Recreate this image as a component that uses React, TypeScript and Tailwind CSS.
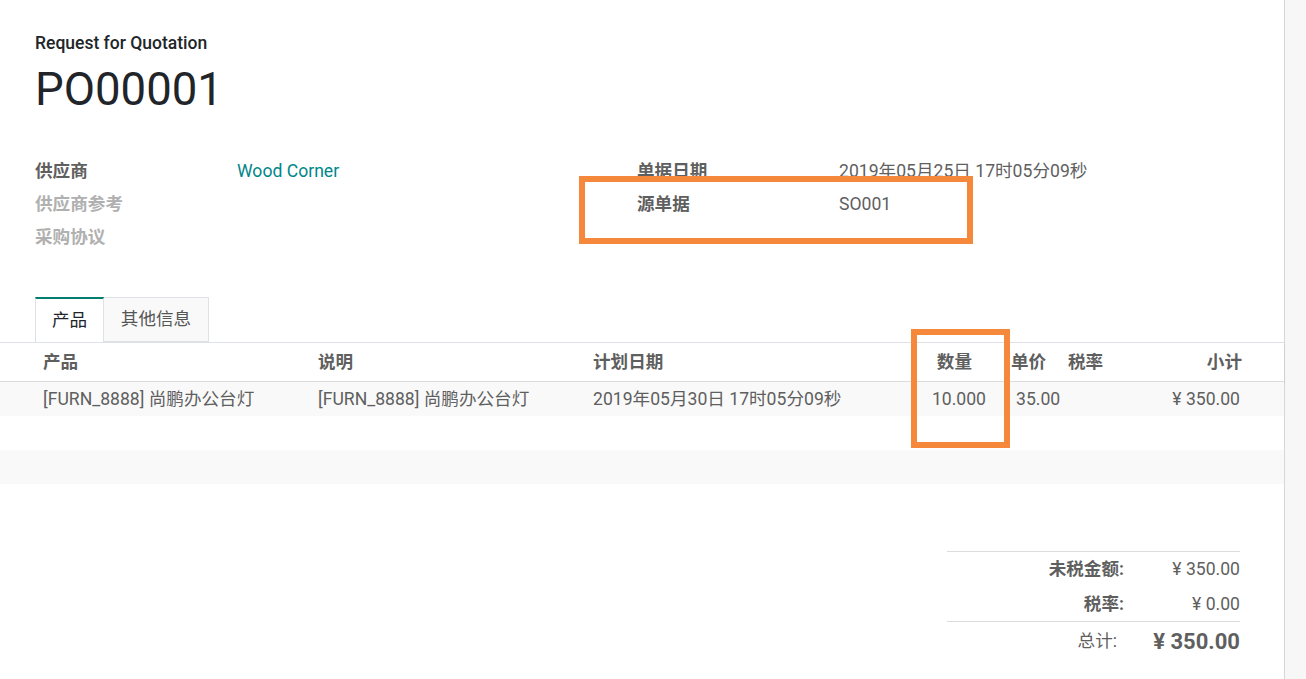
const font = { fontFamily: 'Roboto, "Noto Sans CJK SC", sans-serif' };

type Line = {
  product: string;
  description: string;
  plannedDate: string;
  qty: string;
  price: string;
  tax: string;
  subtotal: string;
};

const lines: Line[] = [
  {
    product: '[FURN_8888] 尚鹏办公台灯',
    description: '[FURN_8888] 尚鹏办公台灯',
    plannedDate: '2019年05月30日 17时05分09秒',
    qty: '10.000',
    price: '35.00',
    tax: '',
    subtotal: '¥ 350.00',
  },
];

const Field = ({ label, value, muted, link }: { label: string; value?: string; muted?: boolean; link?: boolean }) => (
  <div className="flex h-[33px] items-center">
    <div className={`w-[202px] font-bold ${muted ? 'text-[#b0b0b0]' : 'text-[#5f5f5f]'}`}>{label}</div>
    {value && <div className={link ? 'text-[#00868b]' : 'text-[#5f5f5f]'}>{value}</div>}
  </div>
);

export default function App() {
  return (
    <div className="flex min-h-[679px] bg-white text-[17.6px]" style={font}>
      <div className="relative w-[1285px] shrink-0 border-r border-[#d6d6d6]">
        <div className="px-[35px] pt-[31px]">
          <div className="text-[17.5px] font-medium leading-6 text-[#212529]">Request for Quotation</div>
          <h1 className="mt-[7px] text-[45.5px] leading-[56px] text-[#212529]">PO00001</h1>

          <div className="mt-[37px] flex">
            <div className="w-[602px]">
              <Field label="供应商" value="Wood Corner" link />
              <Field label="供应商参考" muted />
              <Field label="采购协议" muted />
            </div>
            <div>
              <Field label="单据日期" value="2019年05月25日 17时05分09秒" />
              <Field label="源单据" value="SO001" />
            </div>
          </div>

          <div className="mt-[43px] flex">
            <div className="relative z-10 -mb-px flex h-[45px] w-[69px] items-center justify-center border-x border-t-2 border-[#dee2e6] border-t-[#017e6f] bg-white text-[#212529]">
              产品
            </div>
            <div className="flex h-[45px] w-[105px] items-center justify-center border border-l-0 border-[#dee2e6] bg-[#f9f9f9] text-[#555]">
              其他信息
            </div>
          </div>
        </div>

        <table className="w-full table-fixed border-t border-[#dee2e6] text-[#5f5f5f]">
          <thead>
            <tr className="h-[39px] border-b border-[#dcdcdc] shadow-[0_2px_3px_rgba(0,0,0,0.06)]">
              <th className="w-[318px] pl-[43px] text-left font-bold">产品</th>
              <th className="w-[275px] text-left font-bold">说明</th>
              <th className="w-[307px] text-left font-bold">计划日期</th>
              <th className="w-[100px] pr-[28px] text-right font-bold">数量</th>
              <th className="w-[57px] pl-[11px] text-left font-bold">单价</th>
              <th className="w-[80px] pl-[11px] text-left font-bold">税率</th>
              <th className="pr-[42px] text-right font-bold">小计</th>
            </tr>
          </thead>
          <tbody>
            {lines.map((l) => (
              <tr key={l.product} className="h-[34px] bg-[#f9f9f9]">
                <td className="whitespace-nowrap pl-[43px]">{l.product}</td>
                <td className="whitespace-nowrap">{l.description}</td>
                <td className="whitespace-nowrap">{l.plannedDate}</td>
                <td className="pr-[14px] text-right">{l.qty}</td>
                <td className="pl-[16px]">{l.price}</td>
                <td>{l.tax}</td>
                <td className="pr-[44px] text-right">{l.subtotal}</td>
              </tr>
            ))}
            <tr className="h-[34px] bg-white">
              <td colSpan={7}></td>
            </tr>
            <tr className="h-[34px] bg-[#f9f9f9]">
              <td colSpan={7}></td>
            </tr>
          </tbody>
        </table>

        <div className="mt-[67px] flex justify-end pr-[44px] text-[#5f5f5f]">
          <div className="w-[293px] border-t border-[#dcdcdc]">
            <div className="flex h-[36px] items-center">
              <div className="w-[177px] text-right font-bold">未税金额:</div>
              <div className="flex-1 text-right">¥ 350.00</div>
            </div>
            <div className="flex h-[34px] items-center border-b border-[#dcdcdc]">
              <div className="w-[177px] text-right font-bold">税率:</div>
              <div className="flex-1 text-right">¥ 0.00</div>
            </div>
            <div className="flex h-[40px] items-center">
              <div className="w-[170px] text-right">总计:</div>
              <div className="flex-1 text-right text-[22px] font-bold">¥ 350.00</div>
            </div>
          </div>
        </div>

        <div className="pointer-events-none absolute left-[579px] top-[176px] h-[68px] w-[394px] border-[6px] border-[#f5883a]" />
        <div className="pointer-events-none absolute left-[911px] top-[329px] h-[119px] w-[99px] border-[6px] border-[#f5883a]" />
      </div>
      <div className="flex-1 bg-[#f7f7f7]" />
    </div>
  );
}
